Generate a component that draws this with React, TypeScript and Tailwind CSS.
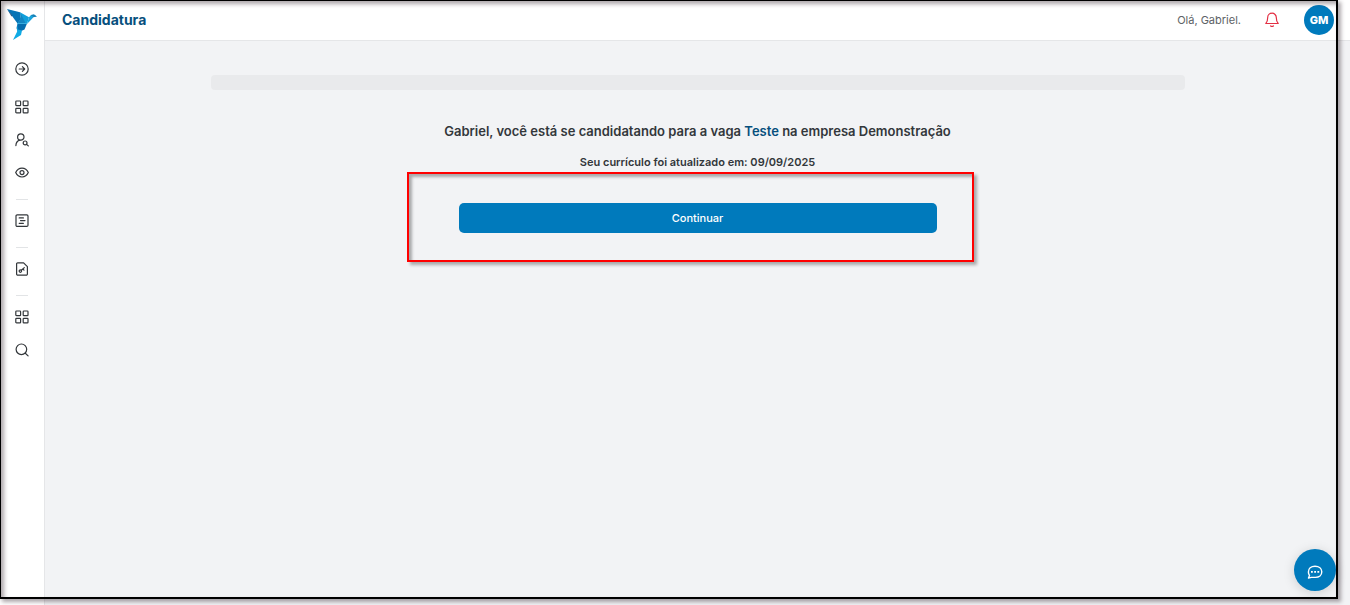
import type { ReactNode } from "react";

function Icon({ children }: { children: ReactNode }) {
  return (
    <svg
      viewBox="0 0 14 14"
      className="size-3.5"
      fill="none"
      stroke="currentColor"
      strokeWidth="1.2"
      strokeLinecap="round"
      strokeLinejoin="round"
      aria-hidden="true"
    >
      {children}
    </svg>
  );
}

function ArrowCircle() {
  return (
    <Icon>
      <circle cx="7" cy="7" r="6.2" />
      <path d="M4.2 7h5.400M7.400 4.700 9.700 7 7.400 9.300" />
    </Icon>
  );
}

function Grid() {
  return (
    <Icon>
      <rect x="0.8" y="1" width="4.8" height="4.6" rx="0.7" />
      <rect x="8.2" y="1" width="4.8" height="4.6" rx="0.7" />
      <rect x="0.8" y="8.3" width="4.8" height="4.6" rx="0.7" />
      <rect x="8.2" y="8.3" width="4.8" height="4.6" rx="0.7" />
    </Icon>
  );
}

function UserSearch() {
  return (
    <Icon>
      <circle cx="5.8" cy="4" r="3.2" />
      <path d="M0.9 12.600c.1-2.900 1.600-4.800 4-5.400" />
      <circle cx="10.100" cy="9.900" r="1.900" />
      <path d="m11.600 11.400 1.700 1.500" />
    </Icon>
  );
}

function Eye() {
  return (
    <Icon>
      <path d="M.7 6.600C2 3.700 4.200 2.200 7 2.200s5 1.500 6.300 4.400C12 9.500 9.800 11 7 11S2 9.500.7 6.600Z" />
      <circle cx="7" cy="6.600" r="2" />
    </Icon>
  );
}

function News() {
  return (
    <Icon>
      <rect x="1" y="0.800" width="12" height="11.600" rx="1.200" />
      <path d="M4.200 3.900h4.200M5.500 6.600h4.500M4.200 9.300h4.200" />
    </Icon>
  );
}

function KeyFile() {
  return (
    <Icon>
      <path d="M2.600.800h6l3.800 3.800v7.400a1.200 1.200 0 0 1-1.200 1.200H2.800a1.200 1.200 0 0 1-1.200-1.200V1.800a1 1 0 0 1 1-1Z" />
      <circle cx="5.400" cy="9.100" r="1.200" />
      <path d="m6.300 8.200 3-2.600M7.900 7l1.100 1.100" />
    </Icon>
  );
}

function Search() {
  return (
    <Icon>
      <circle cx="6.400" cy="6.300" r="5.300" />
      <path d="m10.300 10.200 2.800 2.700" />
    </Icon>
  );
}

function Logo() {
  return (
    <svg viewBox="0 0 30 32" className="h-8 w-[30px]" aria-hidden="true">
      <path d="M0 1 13 4.300 14 11 10.500 15.500Z" fill="#0674b6" />
      <path d="M0 1 5.500 7.500 4.500 8.500Z" fill="#2a5f8c" />
      <path d="m13 4.300 9 5-2 6.700H10.500L14 10Z" fill="#119fda" />
      <path d="m13 4.300 6 11.700-8.500-.5L14 10Z" fill="#1285c2" />
      <path d="m22 9.300 2-2.300 3-.6 2.800 2.200-3.300.6-6.500 6.800Z" fill="#1aa3dc" />
      <path d="m24 7 3-.6 2.800 2.200-3.400.5Z" fill="#1d7fb2" />
      <path d="M10.500 15.500H20L17.500 21.500 11 24.500 9.500 20Z" fill="#046cae" />
      <path d="m10.500 15.500-.3 8L6 32l8-5 1-4.500-4-1Z" fill="#10aae4" />
      <path d="M10.300 15.500H20" stroke="#4bc2ee" strokeWidth=".7" />
    </svg>
  );
}

function NavLink({ label, children }: { label: string; children: ReactNode }) {
  return (
    <a href="#" aria-label={label} className="flex h-5 w-full items-center justify-center">
      {children}
    </a>
  );
}

function Divider() {
  return <hr className="mt-4 mb-[11px] w-3 border-t border-[#e2e4e6]" />;
}

export default function App() {
  return (
    <div className="relative flex min-h-screen overflow-hidden bg-[#f2f3f5] font-['Inter',sans-serif] text-[#33373b]">
      <aside className="flex w-[45px] shrink-0 flex-col items-center border-r border-[#e5e6e8] bg-white pt-2">
        <a href="#" aria-label="Início">
          <Logo />
        </a>
        <nav aria-label="Principal" className="mt-[19px] flex w-full flex-col items-center">
          <NavLink label="Expandir menu"><ArrowCircle /></NavLink>
          <div className="mt-[18px] flex w-full flex-col gap-[13px]">
            <NavLink label="Painel"><Grid /></NavLink>
            <NavLink label="Candidatos"><UserSearch /></NavLink>
            <NavLink label="Visualizar"><Eye /></NavLink>
          </div>
          <Divider />
          <NavLink label="Currículo"><News /></NavLink>
          <Divider />
          <NavLink label="Acesso"><KeyFile /></NavLink>
          <Divider />
          <div className="flex w-full flex-col gap-[13px]">
            <NavLink label="Aplicativos"><Grid /></NavLink>
            <NavLink label="Buscar"><Search /></NavLink>
          </div>
        </nav>
      </aside>

      <div className="flex min-w-0 flex-1 flex-col">
        <header className="flex h-[41px] items-center justify-between border-b border-[#e5e6e8] bg-white pr-4 pl-[17px]">
          <h1 className="text-sm font-bold text-[#064f7d]">Candidatura</h1>
          <div className="flex items-center">
            <span className="text-[11px] text-[#5d6266]">Olá, Gabriel.</span>
            <button type="button" aria-label="Notificações" className="ml-6 text-[#e32f43]">
              <svg viewBox="0 0 14 16" className="h-4 w-3.5" fill="none" stroke="currentColor" strokeWidth="1.200" strokeLinecap="round" strokeLinejoin="round" aria-hidden="true">
                <path d="M.8 11.500c1.400-1.300 1.900-2.600 1.900-6A4.300 4.300 0 0 1 7 1.200a4.300 4.300 0 0 1 4.300 4.300c0 3.400.5 4.700 1.900 6ZM5.600 13.900c.8.600 2 .6 2.800 0" />
              </svg>
            </button>
            <button type="button" className="ml-[25px] size-[30px] rounded-full bg-[#007abc] text-[11px] font-extrabold text-white">GM</button>
          </div>
        </header>

        <main className="flex flex-1 flex-col items-center px-6 pt-[34px]">
          <div className="h-[15px] w-full max-w-[974px] rounded bg-[#e9eaec]" />
          <p className="mt-[31px] text-center text-[13px] leading-5 font-semibold">
            Gabriel, você está se candidatando para a vaga{" "}
            <strong className="font-semibold text-[#064f7d]">Teste</strong> na empresa{" "}
            <strong className="font-semibold">Demonstração</strong>
          </p>
          <p className="mt-[13px] text-center text-[11px] leading-4 font-semibold">
            Seu currículo foi atualizado em: 09/09/2025
          </p>
          <div className="relative mt-[33px] w-full max-w-[478px]">
            <button type="button" className="block h-[30px] w-full rounded-[5px] bg-[#007abc] text-[11px] font-medium text-white">
              Continuar
            </button>
            <div className="pointer-events-none absolute -top-[31px] -right-[37px] -bottom-[29px] -left-[52px] border-2 border-[#ff0000] shadow-[3px_3px_3px_rgba(0,0,0,0.3),inset_3px_3px_3px_rgba(0,0,0,0.3)]" />
          </div>
        </main>
      </div>

      <button type="button" aria-label="Abrir conversa" className="absolute right-3.5 bottom-3.5 flex size-[42px] items-center justify-center rounded-full bg-[#007abc] text-white shadow-[0_2px_12px_rgba(0,0,0,0.15)]">
        <svg viewBox="0 0 16 14" className="mt-1 h-3.5 w-4" fill="none" stroke="currentColor" strokeWidth="1.400" strokeLinejoin="round" aria-hidden="true">
          <path d="M1.500 13.100 2.500 10.400A5.600 5.600 0 0 1 1.400 7C1.400 3.600 4 1.200 8 1.200s6.800 2.200 6.800 5.600-2.800 5.600-6.300 5.600H4.300Z" />
          <path d="M4 6.800h1.800M7.200 6.800H9M10.400 6.800h1.800" strokeWidth="1.800" />
        </svg>
      </button>

      <div className="pointer-events-none absolute -top-px right-3 bottom-1.5 -left-px border-2 border-black shadow-[3px_3px_4px_rgba(50,35,45,0.4),inset_3px_3px_4px_rgba(50,35,45,0.4)]" />
    </div>
  );
}
